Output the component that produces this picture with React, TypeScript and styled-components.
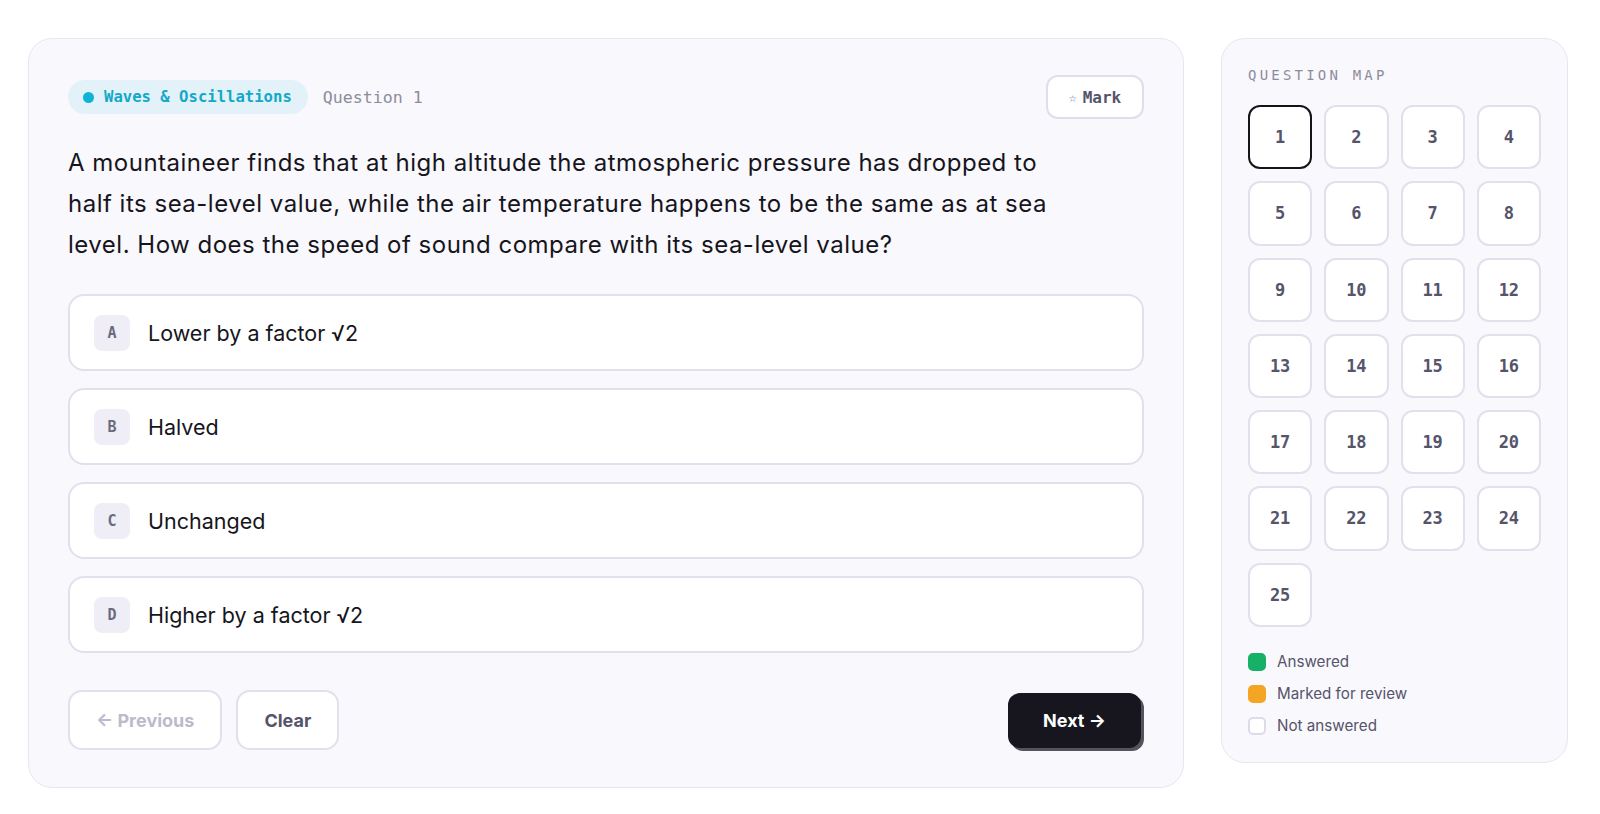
import React from "react";
import styled, { createGlobalStyle } from "styled-components";

const GlobalStyle = createGlobalStyle`
	body {
		margin: 0;
		background: #ffffff;
		font-family: "Inter", "Noto Sans", sans-serif;
		color: #16151c;
	}
`;

const mono = `"DejaVu Sans Mono", "Liberation Mono", monospace`;

const options = [
	{ key: "A", text: "Lower by a factor √2" },
	{ key: "B", text: "Halved" },
	{ key: "C", text: "Unchanged" },
	{ key: "D", text: "Higher by a factor √2" },
];

const legend = [
	{ label: "Answered", color: "#16b166", border: "#16b166" },
	{ label: "Marked for review", color: "#f5a524", border: "#f5a524" },
	{ label: "Not answered", color: "#ffffff", border: "#dddbe8" },
];

function App() {
	const numbers = Array.from({ length: 25 }, (_, i) => i + 1);

	return (
		<Page>
			<GlobalStyle />
			<QuestionCard>
				<Header>
					<Topic>
						<Dot />
						Waves &amp; Oscillations
					</Topic>
					<QuestionNo>Question 1</QuestionNo>
					<MarkButton>
						<Star>☆</Star> Mark
					</MarkButton>
				</Header>
				<Prompt>
					A mountaineer finds that at high altitude the atmospheric pressure has dropped to
					<br />
					half its sea-level value, while the air temperature happens to be the same as at sea
					<br />
					level. How does the speed of sound compare with its sea-level value?
				</Prompt>
				<Options>
					{options.map((o) => (
						<Option key={o.key}>
							<OptionKey>{o.key}</OptionKey>
							<OptionText>{o.text}</OptionText>
						</Option>
					))}
				</Options>
				<Footer>
					<GhostButton $disabled>← Previous</GhostButton>
					<GhostButton>Clear</GhostButton>
					<Spacer />
					<NextButton>Next →</NextButton>
				</Footer>
			</QuestionCard>

			<MapPanel>
				<MapTitle>QUESTION MAP</MapTitle>
				<MapGrid>
					{numbers.map((n) => (
						<Cell key={n} $current={n === 1}>
							{n}
						</Cell>
					))}
				</MapGrid>
				<Legend>
					{legend.map((l) => (
						<LegendRow key={l.label}>
							<Swatch $color={l.color} $border={l.border} />
							{l.label}
						</LegendRow>
					))}
				</Legend>
			</MapPanel>
		</Page>
	);
}

const Page = styled.div`
	display: grid;
	grid-template-columns: 1156px 347px;
	gap: 37px;
	align-items: start;
	padding: 38px 32px 26px 28px;
`;

const Card = styled.section`
	background: #f9f8fd;
	border: 1px solid #e8e6f0;
	border-radius: 24px;
	box-sizing: border-box;
`;

const QuestionCard = styled(Card)`
	padding: 36px 39px 37px 39px;
`;

const Header = styled.div`
	display: flex;
	align-items: center;
	height: 44px;
`;

const Topic = styled.div`
	display: flex;
	align-items: center;
	gap: 10px;
	height: 34px;
	padding: 0 16px 0 15px;
	border-radius: 17px;
	background: #e2f2f8;
	color: #12a8c9;
	font-family: ${mono};
	font-weight: 700;
	font-size: 15.6px;
`;

const Dot = styled.span`
	width: 11px;
	height: 11px;
	border-radius: 50%;
	background: #0fb3d6;
`;

const QuestionNo = styled.span`
	margin-left: 15px;
	font-family: ${mono};
	font-size: 16.6px;
	color: #8d8c99;
`;

const MarkButton = styled.button`
	margin-left: auto;
	width: 98px;
	height: 44px;
	border: 2px solid #e0deec;
	border-radius: 12px;
	background: #ffffff;
	color: #55546a;
	font-family: ${mono};
	font-weight: 700;
	font-size: 16px;
	display: flex;
	align-items: center;
	justify-content: center;
	gap: 6px;
`;

const Star = styled.span`
	font-size: 13px;
	font-weight: 400;
`;

const Prompt = styled.p`
	margin: 24px 0 0;
	white-space: nowrap;
	font-size: 24px;
	line-height: 40.8px;
	letter-spacing: 0.5px;
	color: #16151c;
`;

const Options = styled.div`
	display: flex;
	flex-direction: column;
	gap: 17px;
	margin-top: 29px;
`;

const Option = styled.div`
	display: flex;
	align-items: center;
	gap: 18px;
	height: 77px;
	padding: 0 24px;
	box-sizing: border-box;
	background: #ffffff;
	border: 2px solid #e2e0ec;
	border-radius: 16px;
`;

const OptionKey = styled.span`
	width: 36px;
	height: 36px;
	border-radius: 8px;
	background: #efeef6;
	color: #6b6a7d;
	font-family: ${mono};
	font-weight: 700;
	font-size: 15px;
	display: flex;
	align-items: center;
	justify-content: center;
`;

const OptionText = styled.span`
	font-size: 21.5px;
	color: #16151c;
`;

const Footer = styled.div`
	display: flex;
	align-items: center;
	gap: 14px;
	margin-top: 37px;
`;

const Spacer = styled.div`
	flex: 1;
`;

const GhostButton = styled.button<{ $disabled?: boolean }>`
	height: 60px;
	padding: 0 26px;
	border: 2px solid #e2e0ec;
	border-radius: 14px;
	background: #ffffff;
	font-family: "Inter", sans-serif;
	font-weight: 700;
	font-size: 18px;
	color: ${(p) => (p.$disabled ? "#bcbacb" : "#55546a")};
`;

const NextButton = styled.button`
	width: 133px;
	height: 55px;
	margin-right: 3px;
	border: none;
	border-radius: 12px;
	background: #17161f;
	box-shadow: 3px 3px 0 #55545e;
	color: #ffffff;
	font-family: "Inter", sans-serif;
	font-weight: 700;
	font-size: 18px;
`;

const MapPanel = styled(Card)`
	padding: 28px 26px 25px;
`;

const MapTitle = styled.div`
	font-family: ${mono};
	font-size: 14px;
	line-height: 16px;
	letter-spacing: 3.2px;
	color: #8d8c9c;
`;

const MapGrid = styled.div`
	display: grid;
	grid-template-columns: repeat(4, 1fr);
	gap: 12px;
	margin-top: 22px;
`;

const Cell = styled.div<{ $current?: boolean }>`
	aspect-ratio: 1;
	box-sizing: border-box;
	display: flex;
	align-items: center;
	justify-content: center;
	background: #ffffff;
	border: 2px solid ${(p) => (p.$current ? "#15141b" : "#e2e0ec")};
	border-radius: 12px;
	font-family: ${mono};
	font-weight: 700;
	font-size: 17px;
	color: #55546a;
`;

const Legend = styled.div`
	display: flex;
	flex-direction: column;
	gap: 10px;
	margin-top: 24px;
`;

const LegendRow = styled.div`
	display: flex;
	align-items: center;
	gap: 11px;
	height: 22px;
	font-size: 15.2px;
	color: #55546a;
`;

const Swatch = styled.span<{ $color: string; $border: string }>`
	width: 18px;
	height: 18px;
	box-sizing: border-box;
	border-radius: 5px;
	background: ${(p) => p.$color};
	border: 2px solid ${(p) => p.$border};
`;

export default App;
